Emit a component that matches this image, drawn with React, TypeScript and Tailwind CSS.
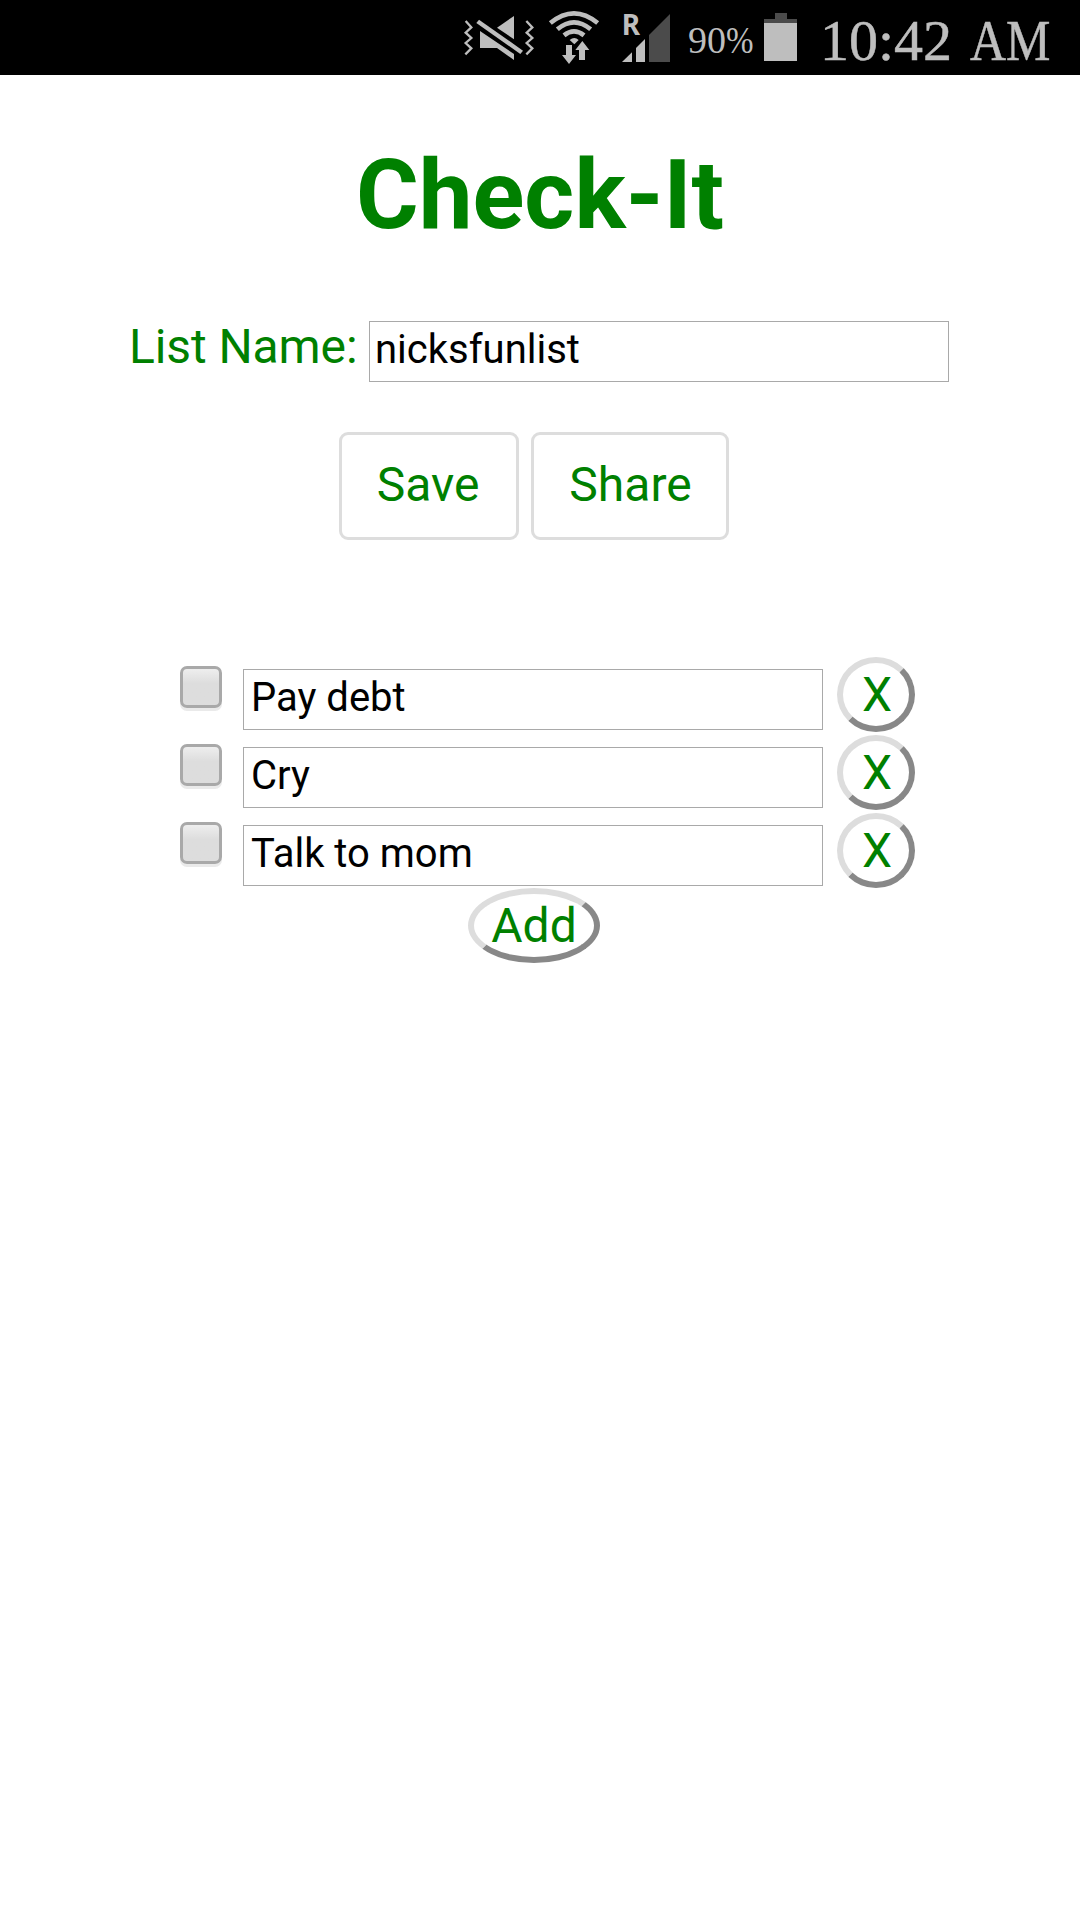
import React from "react";

const items = ["Pay debt", "Cry", "Talk to mom"];

function StatusBar() {
  return (
    <div className="flex h-[75px] items-start bg-black pl-[462px] font-['Liberation_Serif',serif] text-[#bebebe]">
      <svg className="mr-[12px] shrink-0" width="74" height="75" viewBox="36 0 222 225">
        <g fill="#bebebe">
          <path d="M192 48V118L141 83Z" />
          <path d="M90 93L192 162V180L141 144H90Z" />
          <path d="M87 59L219 152L211 162L79 69Z" />
        </g>
        <g fill="none" stroke="#bebebe" strokeWidth="7">
          <path d="M47 63L64 82L47 98L64 114L47 129L64 145L46 163" />
          <path d="M229 63L247 82L230 98L247 114L230 129L247 145L229 163" />
        </g>
      </svg>
      <svg className="mr-[20px] shrink-0" width="52" height="75" viewBox="294 0 156 225">
        <g fill="none" stroke="#bebebe" strokeWidth="14">
          <path d="M301 69Q372 11 443 69" />
          <path d="M322 88Q372 46 422 88" />
          <path d="M342 106Q372 82 402 106" />
        </g>
        <g fill="#bebebe">
          <path d="M359 120Q373 108 386 120L373 133Z" />
          <path d="M348 135H366V165H378L357 192L336 165H348Z" />
          <path d="M387 180V150H376L397 123L418 150H405V180Z" />
        </g>
      </svg>
      <svg className="mr-[16px] shrink-0" width="52" height="75" viewBox="510 0 156 225">
        <text x="515" y="105" fontSize="86" fontWeight="700" fontFamily="Noto Sans" textLength="55" lengthAdjust="spacingAndGlyphs" fill="#bebebe">R</text>
        <path d="M516 186L546 157V186Z" fill="#bebebe" />
        <path d="M558 186V144L585 117V186Z" fill="#bebebe" />
        <path d="M597 186V105L660 42V186Z" fill="#4b4b4b" />
      </svg>
      <div className="mr-[9px] flex w-[66px] shrink-0 pt-[19px] text-[38px] leading-[43px]">
        <span>90</span>
        <span className="inline-block origin-left scale-x-[0.87]">%</span>
      </div>
      <svg className="mr-[22px] shrink-0" width="35" height="75" viewBox="249 0 105 225">
        <path d="M285 39H321V57H351V69H252V57H285Z" fill="#4b4b4b" />
        <path d="M252 69H351V183H252Z" fill="#bebebe" />
      </svg>
      <div className="flex shrink-0 pt-[8px] text-[58px] leading-[66px] [-webkit-text-stroke:0.5px_#bebebe]">
        <span className="w-[150px]">10:42</span>
        <span className="inline-block origin-left scale-x-[0.86]">AM</span>
      </div>
    </div>
  );
}

const fieldClass =
  "block h-[61px] w-[580px] rounded-none border border-[#a9a9a9] bg-white pb-[4px] text-[40px] leading-[47px] text-black outline-none";

const roundButton =
  "h-[75px] rounded-[50%] border-[6px] border-t-[#ddd] border-l-[#ddd] border-r-[#888] border-b-[#888] bg-white text-[48px] leading-[56px]";

const squareButton =
  "h-[108px] rounded-[9px] border-[3px] border-[#ddd] bg-white pb-[2px]";

export default function App() {
  return (
    <div className="h-[1920px] w-[1080px] overflow-hidden bg-white font-['Roboto',sans-serif] text-[48px] text-[#008000]">
      <StatusBar />
      <h1 className="mt-[64px] text-center text-[96px] leading-[112px] font-bold">Check-It</h1>

      <div className="mt-[70px] flex pl-[129px]">
        <label className="w-[240px] leading-[52px] tracking-[-0.1px]">List Name:</label>
        <input className={`${fieldClass} pl-[5px]`} defaultValue="nicksfunlist" />
      </div>

      <div className="mt-[50px] flex gap-[12px] pl-[339px]">
        <button className={`${squareButton} w-[180px] pr-[2px]`}>Save</button>
        <button className={`${squareButton} w-[198px] pl-[1px]`}>Share</button>
      </div>

      <ul className="mt-[117px] pl-[180px]">
        {items.map((item) => (
          <li key={item} className="flex h-[78px] items-start">
            <span
              role="checkbox"
              aria-checked="false"
              className="mt-[9px] mr-[21px] h-[42px] w-[42px] rounded-[7px] border-[3px] border-[#a9a9a9] bg-linear-to-b from-[#eeeeee] to-[#dddddd] to-40% shadow-[0_3px_0_#eaeaea]"
            />
            <div className="mt-[12px] mr-[14px]">
              <input className={`${fieldClass} pl-[7px]`} defaultValue={item} />
            </div>
            <button className={`${roundButton} w-[78px] pl-[2px]`}>X</button>
          </li>
        ))}
      </ul>
      <button className={`${roundButton} -mt-[3px] ml-[468px] block w-[132px]`}>Add</button>
    </div>
  );
}
